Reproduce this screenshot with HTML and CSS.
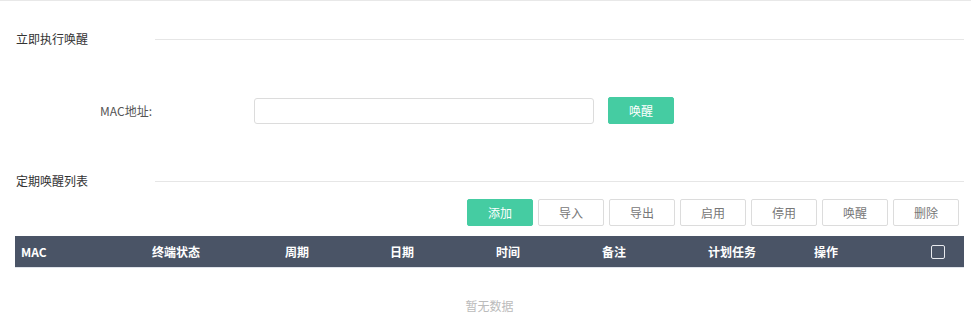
FILE: index.html
```html
<!DOCTYPE html>
<html lang="zh-CN">
<head>
<meta charset="utf-8">
<title>唤醒</title>
<link rel="stylesheet" href="styles.css">
</head>
<body>
<div class="page">
  <div class="section-head first">
    <div class="section-title">立即执行唤醒</div>
    <div class="section-line"></div>
  </div>
  <div class="form-row">
    <label class="form-label">MAC地址:</label>
    <input class="form-input" type="text">
    <button class="btn btn-primary btn-wake">唤醒</button>
  </div>
  <div class="section-head second">
    <div class="section-title">定期唤醒列表</div>
    <div class="section-line"></div>
  </div>
  <div class="toolbar">
    <button class="btn btn-primary">添加</button>
    <button class="btn">导入</button>
    <button class="btn">导出</button>
    <button class="btn">启用</button>
    <button class="btn">停用</button>
    <button class="btn">唤醒</button>
    <button class="btn">删除</button>
  </div>
  <div class="table">
    <div class="thead">
      <div class="th">MAC</div>
      <div class="th">终端状态</div>
      <div class="th">周期</div>
      <div class="th">日期</div>
      <div class="th">时间</div>
      <div class="th">备注</div>
      <div class="th">计划任务</div>
      <div class="th">操作</div>
      <div class="th"><span class="checkbox"></span></div>
    </div>
    <div class="empty">暂无数据</div>
  </div>
</div>
</body>
</html>
```
FILE: styles.css
```css
* { box-sizing: border-box; }
html, body {
  margin: 0;
  padding: 0;
  background: #fff;
  font-family: "Noto Sans CJK SC", "Noto Sans", "Liberation Sans", sans-serif;
  font-size: 12px;
  color: #333;
}
.page {
  width: 971px;
  height: 336px;
  border-top: 1px solid #e8e8e8;
  overflow: hidden;
}
.section-head {
  display: flex;
  align-items: center;
  height: 20px;
  padding-left: 16px;
  padding-right: 7px;
}
.section-head.first { margin-top: 28px; }
.section-head.second { margin-top: 47px; }
.section-title {
  width: 139px;
  line-height: 20px;
  color: #333;
}
.section-line {
  flex: 1;
  height: 1px;
  background: #e6e6e6;
}
.form-row {
  display: flex;
  align-items: center;
  margin-top: 48px;
  height: 27px;
}
.form-label {
  width: 152px;
  text-align: right;
  color: #555;
}
.form-input {
  margin-left: 102px;
  width: 340px;
  height: 26px;
  border: 1px solid #dcdcdc;
  border-radius: 3px;
  padding: 0 8px;
  font: inherit;
  outline: none;
}
.btn {
  width: 66px;
  height: 27px;
  border: 1px solid #dcdcdc;
  border-radius: 2px;
  background: #fff;
  color: #777;
  font: inherit;
  font-size: 12px;
  padding: 0;
  cursor: pointer;
}
.btn-primary {
  background: #45cca2;
  border-color: #45cca2;
  color: #fff;
}
.btn-wake { margin-left: 14px; }
.toolbar {
  display: flex;
  justify-content: flex-end;
  gap: 5px;
  margin-top: 8px;
  padding-right: 12px;
}
.table {
  margin: 10px 7px 0 15px;
}
.thead {
  display: grid;
  grid-template-columns: 131px 133px 105px 106px 106px 106px 106px 117px 1fr;
  height: 32px;
  background: #4a5466;
  border-bottom: 1px solid #dfe3ea;
  color: #fff;
  font-weight: bold;
  align-items: center;
}
.th {
  padding-left: 6px;
  line-height: 31px;
  display: flex;
  align-items: center;
}
.checkbox {
  display: inline-block;
  width: 14px;
  height: 14px;
  border: 1px solid #e8eaee;
  border-radius: 2px;
  background: transparent;
}
.empty {
  text-align: center;
  color: #bbb;
  padding-top: 29px;
  line-height: 18px;
}
```
